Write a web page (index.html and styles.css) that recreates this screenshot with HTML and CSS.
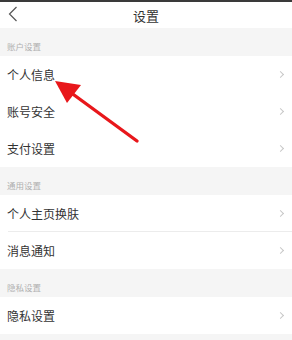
FILE: index.html
```html
<!DOCTYPE html>
<html lang="zh-CN">
<head>
<meta charset="utf-8">
<link rel="stylesheet" href="styles.css">
</head>
<body>
<div class="page">
  <div class="statusbar"></div>
  <div class="navbar">
    <svg class="back" width="10" height="16" viewBox="0 0 10 16"><path d="M8.5 1 L1.5 8 L8.5 15" fill="none" stroke="#555" stroke-width="1.2"/></svg>
    <div class="title">设置</div>
  </div>
  <div class="section">账户设置</div>
  <div class="group">
    <div class="row"><span>个人信息</span><i class="chev"></i></div>
    <div class="row"><span>账号安全</span><i class="chev"></i></div>
    <div class="row"><span>支付设置</span><i class="chev"></i></div>
  </div>
  <div class="section">通用设置</div>
  <div class="group">
    <div class="row sep"><span>个人主页换肤</span><i class="chev"></i></div>
    <div class="row"><span>消息通知</span><i class="chev"></i></div>
  </div>
  <div class="section">隐私设置</div>
  <div class="group">
    <div class="row"><span>隐私设置</span><i class="chev"></i></div>
  </div>
  <svg class="arrow" width="292" height="340" viewBox="0 0 292 340">
    <line x1="137" y1="141" x2="70" y2="92" stroke="#e8171b" stroke-width="3.4" stroke-linecap="round"/>
    <polygon points="55,81 81,85 67,103" fill="#e8171b"/>
  </svg>
</div>
</body>
</html>
```
FILE: styles.css
```css
* { box-sizing: border-box; margin: 0; padding: 0; }
html, body { background: #f5f5f5; }
body { font-family: "Noto Sans CJK SC", "Noto Sans", sans-serif; }
.page { position: relative; width: 292px; height: 340px; overflow: hidden; background: #f5f5f5; }
.statusbar { height: 2px; background: #3a3a3a; }
.navbar { position: relative; height: 26px; background: #fff; display: flex; align-items: center; justify-content: center; }
.back { position: absolute; left: 8px; top: 4px; }
.title { font-size: 13px; color: #333; line-height: 1; }
.section { height: 28px; padding: 13px 0 0 7px; font-size: 8.5px; line-height: 10px; color: #b0b0b0; }
.group { background: #fff; }
.row { height: 37px; display: flex; align-items: center; justify-content: space-between; padding: 0 9px 0 7px; font-size: 12px; color: #333; }
.row.sep { position: relative; }
.row.sep::after { content: ""; position: absolute; left: 8px; right: 0; bottom: 0; height: 1px; background: #ececec; }
.chev { width: 5px; height: 5px; border-top: 1px solid #c8c8c8; border-right: 1px solid #c8c8c8; transform: rotate(45deg); }
.arrow { position: absolute; left: 0; top: 0; }
```
